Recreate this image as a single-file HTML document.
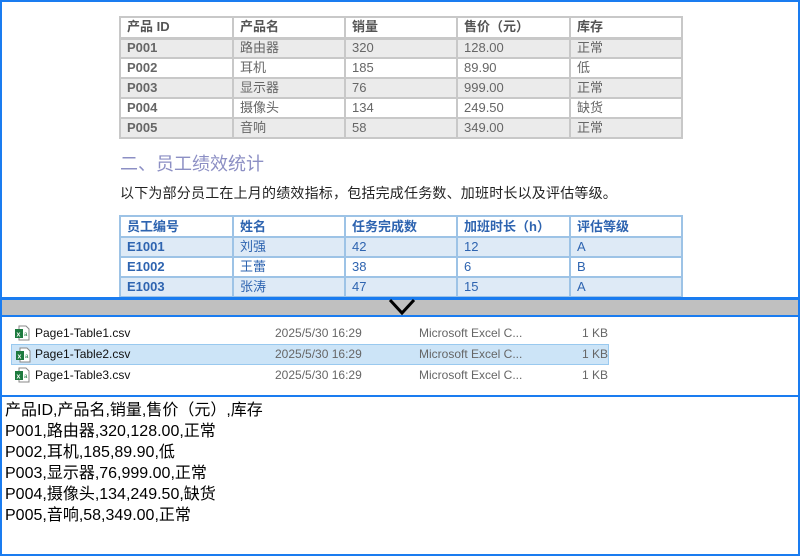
<!DOCTYPE html>
<html><head><meta charset="utf-8"><style>
*{margin:0;padding:0;box-sizing:border-box}
body{width:800px;height:556px;background:#fff;position:relative;overflow:hidden;font-family:"Liberation Sans","Noto Sans CJK SC",sans-serif}
.frame{position:absolute;left:0;top:0;width:800px;height:556px;border:2px solid #1a7cf0}
table{position:absolute;border-collapse:collapse;table-layout:fixed;font-size:13px}
td{border:2px solid #c8c8c8;padding:0 6px;height:20px;line-height:16px;white-space:nowrap;overflow:hidden}
#t1{left:119px;top:16px;width:562px;color:#666}
#t1 tr.h td{background:#fff;color:#555;font-weight:bold;height:21px}
#t1 tr.h{border-bottom:3px solid #c8c8c8}
#t1 td{background:#ebebeb}
#t1 tr:nth-child(3) td,#t1 tr:nth-child(5) td{background:#fff}
#t1 td:first-child{font-weight:bold}
#t2{left:119px;top:215px;width:562px;color:#2e64b0}
#t2 td{border-color:#9dc3e6;background:#deeaf6}
#t2 tr.h td{background:#fff;font-weight:bold;height:21px}
#t2 tr:nth-child(3) td{background:#fff}
#t2 td:first-child{font-weight:bold}
.h2{position:absolute;left:120px;top:150px;font-size:18px;color:#8c8fc4}
.p{position:absolute;left:120px;top:183px;font-size:14px;color:#222;letter-spacing:0.2px}
.band{position:absolute;left:0;top:297px;width:800px;height:20px;background:#c0c0c0;border-top:3px solid #1a7cf0;border-bottom:2px solid #1a7cf0}
.files{position:absolute;left:0;top:317px;width:800px;height:80px;border-bottom:2px solid #1a7cf0}
.row{position:absolute;left:11px;width:598px;height:21px;font-size:12px;color:#111}
.row.sel{background:#cce4f7;border:1px solid #99c9ef}
.row span{position:absolute;top:3px}
.d{color:#666}
.ic{position:absolute;left:3px;top:2px;width:16px;height:16px}
.txt{position:absolute;left:5px;top:400px;font-size:16px;line-height:21px;color:#000}
</style></head><body>
<table id="t1">
<col style="width:113px"><col style="width:112px"><col style="width:112px"><col style="width:113px"><col style="width:112px">
<tr class="h"><td>产品 ID</td><td>产品名</td><td>销量</td><td>售价（元）</td><td>库存</td></tr>
<tr><td>P001</td><td>路由器</td><td>320</td><td>128.00</td><td>正常</td></tr>
<tr><td>P002</td><td>耳机</td><td>185</td><td>89.90</td><td>低</td></tr>
<tr><td>P003</td><td>显示器</td><td>76</td><td>999.00</td><td>正常</td></tr>
<tr><td>P004</td><td>摄像头</td><td>134</td><td>249.50</td><td>缺货</td></tr>
<tr><td>P005</td><td>音响</td><td>58</td><td>349.00</td><td>正常</td></tr>
</table>
<div class="h2">二、员工绩效统计</div>
<div class="p">以下为部分员工在上月的绩效指标，包括完成任务数、加班时长以及评估等级。</div>
<table id="t2">
<col style="width:113px"><col style="width:112px"><col style="width:112px"><col style="width:113px"><col style="width:112px">
<tr class="h"><td>员工编号</td><td>姓名</td><td>任务完成数</td><td>加班时长（h）</td><td>评估等级</td></tr>
<tr><td>E1001</td><td>刘强</td><td>42</td><td>12</td><td>A</td></tr>
<tr><td>E1002</td><td>王蕾</td><td>38</td><td>6</td><td>B</td></tr>
<tr><td>E1003</td><td>张涛</td><td>47</td><td>15</td><td>A</td></tr>
</table>
<div class="band"><svg style="position:absolute;left:388px;top:-1px" width="30" height="18"><path d="M2 1 L14 14 L26 1" fill="none" stroke="#000" stroke-width="3"/></svg></div>
<div class="files">
<div class="row" style="top:6px"><svg class="ic" viewBox="0 0 16 16"><path d="M5 1h7l3 3v11H5z" fill="#fff" stroke="#888"/><rect x="1" y="4" width="8" height="9" fill="#1d7a3e"/><text x="2.5" y="11.5" font-size="7" fill="#fff" font-family="Liberation Sans" font-weight="bold">x</text><text x="10" y="11" font-size="6" fill="#1d7a3e" font-family="Liberation Sans">a</text></svg><span style="left:24px">Page1-Table1.csv</span><span class="d" style="left:264px">2025/5/30 16:29</span><span class="d" style="left:408px">Microsoft Excel C...</span><span class="d" style="left:571px">1 KB</span></div>
<div class="row sel" style="top:27px"><svg class="ic" viewBox="0 0 16 16"><path d="M5 1h7l3 3v11H5z" fill="#fff" stroke="#888"/><rect x="1" y="4" width="8" height="9" fill="#1d7a3e"/><text x="2.5" y="11.5" font-size="7" fill="#fff" font-family="Liberation Sans" font-weight="bold">x</text><text x="10" y="11" font-size="6" fill="#1d7a3e" font-family="Liberation Sans">a</text></svg><span style="left:23px;top:2px">Page1-Table2.csv</span><span class="d" style="left:263px;top:2px">2025/5/30 16:29</span><span class="d" style="left:407px;top:2px">Microsoft Excel C...</span><span class="d" style="left:570px;top:2px">1 KB</span></div>
<div class="row" style="top:48px"><svg class="ic" viewBox="0 0 16 16"><path d="M5 1h7l3 3v11H5z" fill="#fff" stroke="#888"/><rect x="1" y="4" width="8" height="9" fill="#1d7a3e"/><text x="2.5" y="11.5" font-size="7" fill="#fff" font-family="Liberation Sans" font-weight="bold">x</text><text x="10" y="11" font-size="6" fill="#1d7a3e" font-family="Liberation Sans">a</text></svg><span style="left:24px">Page1-Table3.csv</span><span class="d" style="left:264px">2025/5/30 16:29</span><span class="d" style="left:408px">Microsoft Excel C...</span><span class="d" style="left:571px">1 KB</span></div>
</div>
<div class="txt">产品ID,产品名,销量,售价（元）,库存<br>P001,路由器,320,128.00,正常<br>P002,耳机,185,89.90,低<br>P003,显示器,76,999.00,正常<br>P004,摄像头,134,249.50,缺货<br>P005,音响,58,349.00,正常</div>
<div class="frame"></div>
</body></html>
